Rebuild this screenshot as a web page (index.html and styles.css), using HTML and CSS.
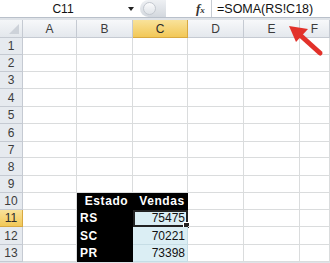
FILE: index.html
```html
<!DOCTYPE html>
<html lang="pt-BR">
<head>
    <meta charset="UTF-8">
    <title>Planilha</title>
    <link rel="stylesheet" href="styles.css">
</head>
<body>
    <div class="app">
        <div class="formula-bar">
            <div class="name-box">C11</div>
            <div class="name-drop"><span class="tri"></span></div>
            <div class="sizer"><span class="knob"></span></div>
            <div class="fx">f<sub>x</sub></div>
            <div class="formula">=SOMA(RS!C18)</div>
        </div>

        <div class="sheet">
            <!-- cabeçalho -->
            <div class="corner"></div>
            <div class="col-head">A</div>
            <div class="col-head">B</div>
            <div class="col-head active">C</div>
            <div class="col-head">D</div>
            <div class="col-head">E</div>
            <div class="col-head">F</div>

            <div class="row-head">1</div><div class="cell"></div><div class="cell"></div><div class="cell"></div><div class="cell"></div><div class="cell"></div><div class="cell"></div>
            <div class="row-head">2</div><div class="cell"></div><div class="cell"></div><div class="cell"></div><div class="cell"></div><div class="cell"></div><div class="cell"></div>
            <div class="row-head">3</div><div class="cell"></div><div class="cell"></div><div class="cell"></div><div class="cell"></div><div class="cell"></div><div class="cell"></div>
            <div class="row-head">4</div><div class="cell"></div><div class="cell"></div><div class="cell"></div><div class="cell"></div><div class="cell"></div><div class="cell"></div>
            <div class="row-head">5</div><div class="cell"></div><div class="cell"></div><div class="cell"></div><div class="cell"></div><div class="cell"></div><div class="cell"></div>
            <div class="row-head">6</div><div class="cell"></div><div class="cell"></div><div class="cell"></div><div class="cell"></div><div class="cell"></div><div class="cell"></div>
            <div class="row-head">7</div><div class="cell"></div><div class="cell"></div><div class="cell"></div><div class="cell"></div><div class="cell"></div><div class="cell"></div>
            <div class="row-head">8</div><div class="cell"></div><div class="cell"></div><div class="cell"></div><div class="cell"></div><div class="cell"></div><div class="cell"></div>
            <div class="row-head">9</div><div class="cell"></div><div class="cell"></div><div class="cell"></div><div class="cell"></div><div class="cell"></div><div class="cell"></div>

            <div class="row-head">10</div><div class="cell"></div>
            <div class="cell dark head">Estado</div><div class="cell dark head center">Vendas</div>
            <div class="cell"></div><div class="cell"></div><div class="cell"></div>

            <div class="row-head active">11</div><div class="cell"></div>
            <div class="cell dark label">RS</div><div class="cell value selected">75475<span class="handle"></span></div>
            <div class="cell"></div><div class="cell"></div><div class="cell"></div>

            <div class="row-head">12</div><div class="cell"></div>
            <div class="cell dark label">SC</div><div class="cell value">70221</div>
            <div class="cell"></div><div class="cell"></div><div class="cell"></div>

            <div class="row-head">13</div><div class="cell"></div>
            <div class="cell dark label">PR</div><div class="cell value">73398</div>
            <div class="cell"></div><div class="cell"></div><div class="cell"></div>
        </div>

        <!-- seta vermelha apontando para a fórmula -->
        <svg class="arrow" width="50" height="40" viewBox="0 0 50 40">
            <line x1="40" y1="33" x2="20" y2="15" stroke="#e2312a" stroke-width="5" stroke-linecap="round"/>
            <polygon points="9,6 28,9 16,22" fill="#e2312a"/>
        </svg>
    </div>
</body>
</html>
```

FILE: styles.css
```css
body {
    margin: 0;
    font-family: "Liberation Sans", Arial, sans-serif;
    background-color: #dfe3e8;
}

.app {
    position: relative;
    width: 330px;
    height: 263px;
    overflow: hidden;
}

/* barra de fórmulas */
.formula-bar {
    display: flex;
    align-items: center;
    height: 17px;
    background: #fff;
    border-bottom: 1px solid #b9c0ca;
    margin-bottom: 2px;
    font-size: 12px;
    color: #111;
}

.name-box {
    width: 122px;
    text-align: center;
    padding-left: 2px;
}

.name-drop {
    width: 14px;
    display: flex;
    justify-content: center;
}

.tri {
    border-left: 3px solid transparent;
    border-right: 3px solid transparent;
    border-top: 4px solid #222;
}

.sizer {
    width: 26px;
    height: 17px;
    margin-left: 2px;
    border-radius: 9px 0 0 9px;
    background: linear-gradient(#eef0f3, #d3d8de);
    display: flex;
    align-items: center;
    padding-left: 3px;
    box-sizing: border-box;
}

.knob {
    width: 11px;
    height: 11px;
    border-radius: 50%;
    background: linear-gradient(#fbfbfc, #dfe3e8);
    border: 1px solid #c3c8cf;
}

.fx {
    padding-left: 30px;
    font-family: "Liberation Serif", serif;
    font-style: italic;
    font-weight: bold;
    font-size: 13px;
    color: #333;
    box-sizing: border-box;
    border-right: 1px solid #c7ccd3;
    height: 17px;
    line-height: 17px;
    width: 46px;
}

.fx sub {
    font-size: 9px;
    vertical-align: 0;
}

.formula {
    padding-left: 5px;
    font-size: 12.5px;
}

/* grade */
.sheet {
    display: grid;
    grid-template-columns: 23px 54px 56px 55px 56px 56px 1fr;
    grid-template-rows: 18px 17px 17px 17px 18px 17px 18px 16px 18px 17px 17px 17px 18px 17px;
    background: #fff;
}

.corner {
    position: relative;
    background: linear-gradient(#f4f6f8, #e3e7ec);
    border-right: 1px solid #c5cad2;
    border-bottom: 1px solid #c5cad2;
}

.corner::after {
    content: "";
    position: absolute;
    right: 3px;
    bottom: 3px;
    border-left: 10px solid transparent;
    border-bottom: 10px solid #cdd2d9;
}

.col-head,
.row-head {
    display: flex;
    align-items: center;
    justify-content: center;
    font-size: 12px;
    color: #3c3c3c;
    border-right: 1px solid #c5cad2;
    border-bottom: 1px solid #c5cad2;
    box-sizing: border-box;
}

.col-head {
    background: linear-gradient(#f7f8fa, #e4e8ed);
}

.row-head {
    background: #e6eaef;
}

.col-head.active,
.row-head.active {
    background: linear-gradient(#f9e29a, #f2c857);
    border-color: #d8a941;
    color: #2b2b2b;
}

.cell {
    position: relative;
    border-right: 1px solid #dadcdd;
    border-bottom: 1px solid #dadcdd;
    box-sizing: border-box;
    font-size: 12px;
    display: flex;
    align-items: center;
}

.dark {
    background: #000;
    border-color: #000;
    color: #fff;
    font-weight: bold;
}

.head {
    justify-content: center;
    letter-spacing: 0.6px;
    padding-left: 4px;
}

.label {
    padding-left: 3px;
    letter-spacing: 0.5px;
}

.value {
    background: #dbeef4;
    border-color: #c6dde5;
    justify-content: flex-end;
    padding-right: 2px;
    color: #111;
}

.selected {
    outline: 2px solid #222;
    outline-offset: -2px;
}

.handle {
    position: absolute;
    right: -3px;
    bottom: -3px;
    width: 5px;
    height: 5px;
    background: #222;
    border: 1px solid #fff;
}

.arrow {
    position: absolute;
    left: 280px;
    top: 20px;
}
```
